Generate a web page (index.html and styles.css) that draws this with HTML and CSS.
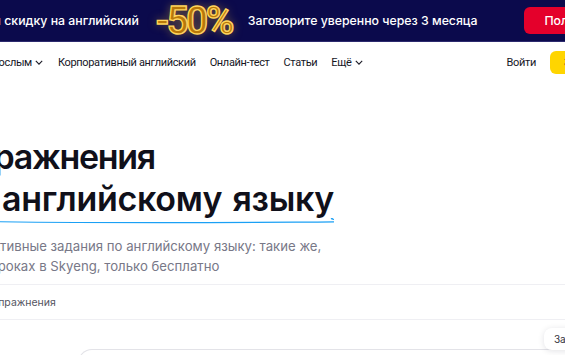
FILE: index.html
```html
<!DOCTYPE html>
<html lang="ru">

<head>
    <meta charset="UTF-8">
    <meta name="viewport" content="width=device-width, initial-scale=1.0">
    <title>Упражнения по английскому языку</title>
    <link rel="stylesheet" href="styles.css">
</head>

<body>

    <div class="promo">
        <span class="promo-text promo-first">Получите урок и скидку на английский</span>
        <span class="promo-sale">-50%</span>
        <span class="promo-text">Заговорите уверенно через 3 месяца</span>
        <a class="promo-btn" href="#">Получить</a>
    </div>

    <div class="nav">
        <a class="nav-link nav-first" href="#">Взрослым
            <svg class="chev" viewBox="0 0 10 6" width="8" height="5"><path d="M1 1l4 4 4-4" fill="none" stroke="#1c1c28" stroke-width="1.4"/></svg>
        </a>
        <a class="nav-link" href="#">Корпоративный английский</a>
        <a class="nav-link" href="#">Онлайн-тест</a>
        <a class="nav-link" href="#">Статьи</a>
        <a class="nav-link" href="#">Ещё
            <svg class="chev" viewBox="0 0 10 6" width="8" height="5"><path d="M1 1l4 4 4-4" fill="none" stroke="#1c1c28" stroke-width="1.4"/></svg>
        </a>
        <a class="nav-login" href="#">Войти</a>
        <a class="nav-btn" href="#">Записаться</a>
    </div>

    <div class="hero">
        <h1 class="hero-title">Упражнения<br><span class="underlined">по английскому языку<svg class="wave" viewBox="0 0 400 10" preserveAspectRatio="none"><path d="M2 5 C 100 8, 250 8, 360 7 S 392 4, 398 1" fill="none" stroke="#1aa0f5" stroke-width="2" stroke-linecap="round"/></svg></span></h1>
        <p class="hero-lead">Интерактивные задания по английскому языку: такие же,<br>как на уроках в Skyeng, только бесплатно</p>
    </div>

    <div class="crumbs">
        <span>Упражнения</span>
    </div>

    <div class="board">
        <div class="card"></div>
        <div class="chip">Задания</div>
    </div>

</body>

</html>
```

FILE: styles.css
```css
body {
    margin: 0px;
    background: #ffffff;
    font-family: Inter, "Noto Sans", sans-serif;
    color: #16161f;
    overflow: hidden;
}

a {
    text-decoration: none;
    color: inherit;
}

.promo {
    height: 41px;
    background: #0b0a4c;
    border-bottom: 1px solid #2c2a6e;
    display: flex;
    align-items: center;
    white-space: nowrap;
    overflow: hidden;
}

.promo > * {
    flex-shrink: 0;
}

.promo-text {
    font-size: 12.3px;
    font-weight: 500;
    color: #ffffff;
}

.promo-first {
    margin-left: -100px;
}

.promo-sale {
    margin: 0 16px 0 17px;
    font-family: Roboto, sans-serif;
    font-size: 39px;
    font-weight: 500;
    letter-spacing: -2.6px;
    color: #b8780a;
    -webkit-text-stroke: 1.4px #ffd45c;
    text-shadow: 0 0 10px rgba(255, 196, 40, 0.55);
}

.promo-btn {
    margin-left: 47px;
    padding: 0 20px;
    height: 27px;
    line-height: 27px;
    border-radius: 6px;
    background: #e4002b;
    color: #ffffff;
    font-size: 12.3px;
    font-weight: 500;
}

.nav {
    height: 40px;
    display: flex;
    align-items: center;
    white-space: nowrap;
    overflow: hidden;
    font-family: Roboto, sans-serif;
}

.nav > * {
    flex-shrink: 0;
}

.nav-link {
    font-size: 11px;
    letter-spacing: -0.35px;
    margin-right: 14px;
    display: flex;
    align-items: center;
    gap: 3px;
}

.nav-first {
    margin-left: -19px;
    margin-right: 15px;
}

.nav-login {
    font-size: 11px;
    letter-spacing: -0.3px;
    margin-left: auto;
    margin-right: 14px;
}

.nav-btn {
    height: 23px;
    line-height: 23px;
    padding: 0 14px;
    margin-right: -73px;
    border-radius: 6px;
    background: #ffd500;
    font-size: 11px;
}

.hero {
    padding-top: 54px;
}

.hero-title {
    margin: 0 0 0 -46px;
    font-size: 34px;
    font-weight: 600;
    line-height: 42px;
    letter-spacing: -1.3px;
    color: #10101a;
    white-space: nowrap;
}

.underlined {
    position: relative;
    display: inline-block;
    margin-left: -3px;
    word-spacing: 2px;
    letter-spacing: -0.3px;
}

.wave {
    position: absolute;
    left: 0;
    bottom: -4px;
    width: 100%;
    height: 6px;
}

.hero-lead {
    margin: 16px 0 0 -54px;
    font-size: 13.2px;
    line-height: 20px;
    color: #787887;
    white-space: nowrap;
}

.crumbs {
    margin-top: 8px;
    height: 34px;
    border-top: 1px solid #efeff3;
    border-bottom: 1px solid #efeff3;
    display: flex;
    align-items: center;
    font-size: 10.5px;
    color: #55555f;
    white-space: nowrap;
}

.crumbs span {
    margin-left: -8px;
}

.board {
    display: flex;
    align-items: flex-start;
    padding: 8px 0 0 78px;
    height: 40px;
}

.card {
    flex: 1;
    margin-top: 21px;
    height: 40px;
    border: 1px solid #e3e3e8;
    border-right: none;
    border-radius: 14px 0 0 0;
}

.chip {
    align-self: flex-start;
    margin-left: -30px;
    margin-right: -40px;
    padding: 5px 10px;
    background: #ffffff;
    border-radius: 8px;
    box-shadow: 0 1px 6px rgba(20, 20, 40, 0.12);
    font-size: 10px;
    color: #33333d;
    white-space: nowrap;
}
```
